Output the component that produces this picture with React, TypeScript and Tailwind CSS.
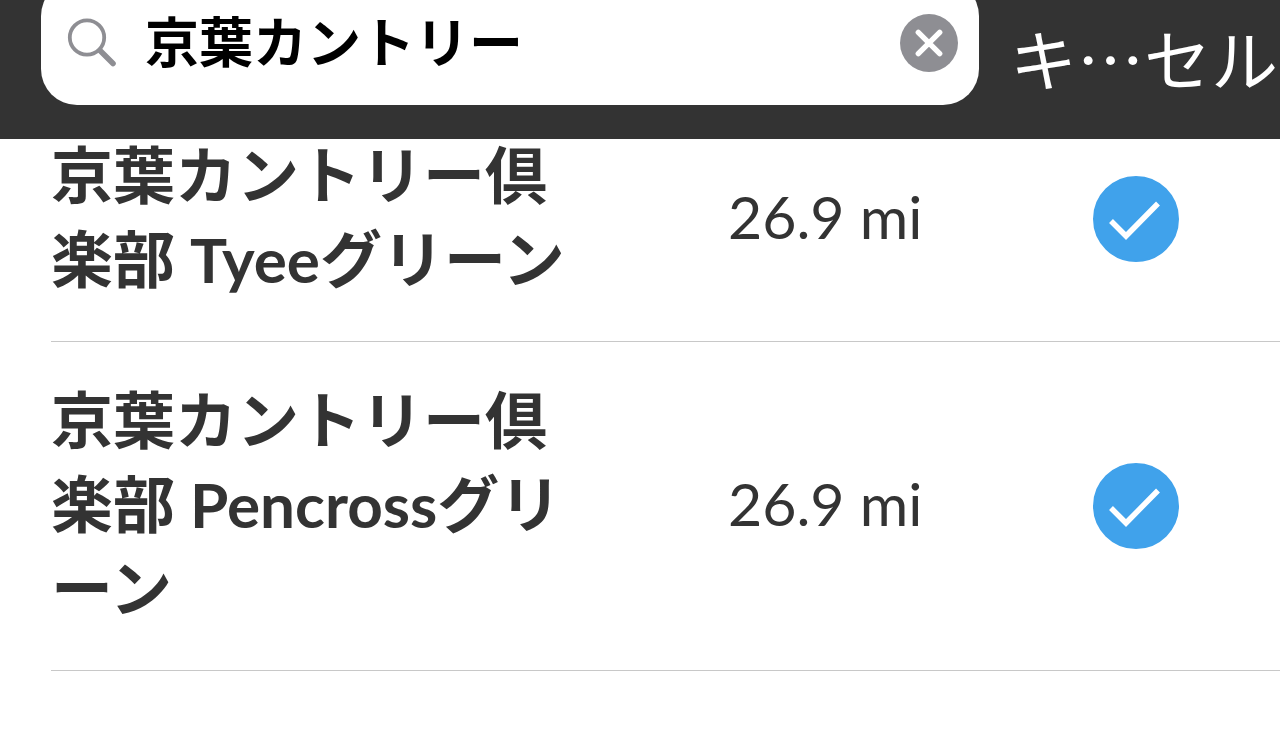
import { useState } from "react";

type Course = { id: string; name: string; distance: string };

const courses: Course[] = [
  { id: "tyee", name: "京葉カントリー倶楽部 Tyeeグリーン", distance: "26.9 mi" },
  { id: "pencross", name: "京葉カントリー倶楽部 Pencrossグリーン", distance: "26.9 mi" },
];

function SearchIcon() {
  return (
    <svg aria-hidden="true" viewBox="0 0 50 50" className="size-[50px] shrink-0" fill="none" stroke="#8e8e93">
      <circle cx="20" cy="19.5" r="17.2" strokeWidth="3.8" />
      <path d="M33 32.5 46 45.5" strokeWidth="5.6" strokeLinecap="round" />
    </svg>
  );
}

function ClearIcon() {
  return (
    <svg aria-hidden="true" viewBox="0 0 58 58" className="size-[58px]">
      <circle cx="29" cy="29" r="29" fill="#8e8e93" />
      <path d="M18.3 18.3 39.7 39.7M39.7 18.3 18.3 39.7" stroke="#fff" strokeWidth="5.4" strokeLinecap="round" />
    </svg>
  );
}

function CourseRow({ course }: { course: Course }) {
  const [checked, setChecked] = useState(true);
  return (
    <li className="grid grid-cols-[677fr_365fr_187fr] items-center border-b border-[#c8c8c8] py-9">
      <label
        htmlFor={course.id}
        className="pr-[157px] pb-1 text-[62px] leading-[84px] font-bold break-all [line-break:anywhere]"
      >
        {course.name}
      </label>
      <span className="pb-1 text-[59px] leading-[84px] font-normal">{course.distance}</span>
      <span className="grid size-[86px]">
        <input
          id={course.id}
          type="checkbox"
          checked={checked}
          onChange={() => setChecked(!checked)}
          className="col-start-1 row-start-1 size-[86px] appearance-none rounded-full border-2 border-[#40a2eb] checked:bg-[#40a2eb]"
        />
        {checked && (
          <svg
            aria-hidden="true"
            viewBox="0 0 86 86"
            className="pointer-events-none col-start-1 row-start-1 size-[86px]"
            fill="none"
            stroke="#fff"
            strokeWidth="5.5"
          >
            <path d="M18 45 33 60 65 27.5" />
          </svg>
        )}
      </span>
    </li>
  );
}

export default function App() {
  const [query, setQuery] = useState("京葉カントリー");
  return (
    <div
      lang="ja"
      className="min-h-screen overflow-hidden bg-white font-['Lato','Noto_Sans_CJK_JP',sans-serif] text-[#333333]"
    >
      <header className="relative z-10 flex items-end bg-[#333333] pb-[34px] pl-[41px] font-['Noto_Sans_CJK_JP',sans-serif]">
        <div className="-mt-5 flex h-[125px] min-w-0 grow items-center gap-7 rounded-[36px] bg-white pr-[21px] pl-[26px]">
          <SearchIcon />
          <input
            type="text"
            aria-label="検索"
            value={query}
            onChange={(e) => setQuery(e.target.value)}
            className="h-20 min-w-0 grow bg-transparent pb-1.5 text-[54px] font-bold text-black outline-none"
          />
          <button type="button" aria-label="クリア" onClick={() => setQuery("")} className="shrink-0">
            <ClearIcon />
          </button>
        </div>
        <button type="button" className="shrink-0 pr-0.5 pb-1 pl-[31px] text-[67px] leading-[88px] font-normal text-white">
          キ…セル
        </button>
      </header>
      <main>
        <ul className="-mt-[42px] pl-[51px]">
          {courses.map((course) => (
            <CourseRow key={course.id} course={course} />
          ))}
        </ul>
      </main>
    </div>
  );
}
